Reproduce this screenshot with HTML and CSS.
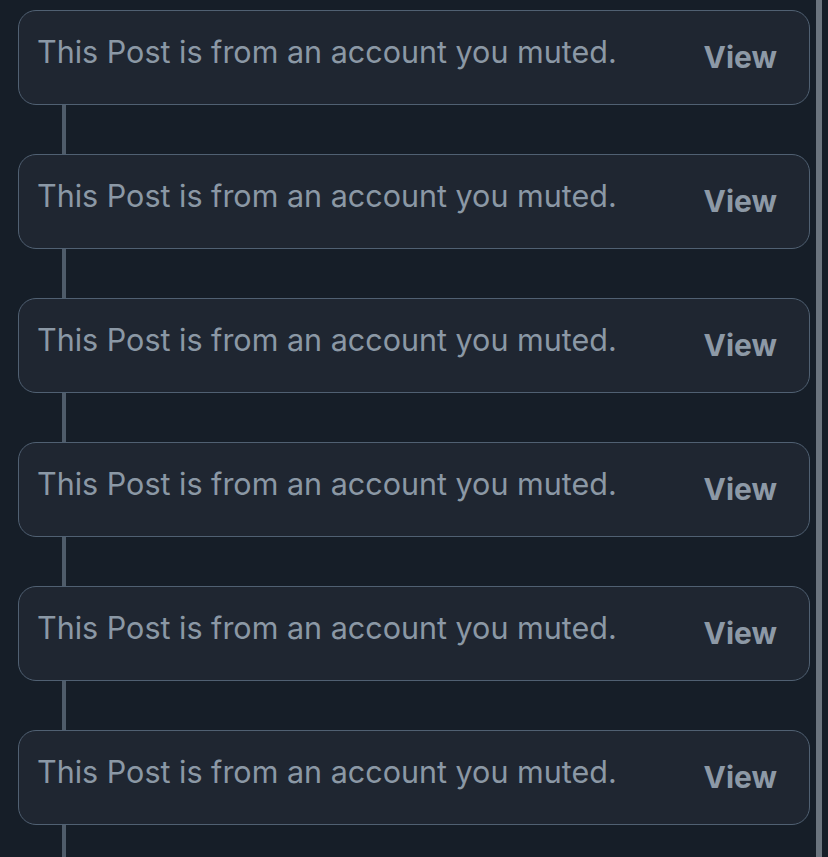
FILE: index.html
```html
<!DOCTYPE html>
<html lang="en">
<head>
    <meta charset="UTF-8">
    <meta name="viewport" content="width=device-width, initial-scale=1.0">
    <title>Muted posts</title>
    <link rel="stylesheet" href="styles.css">
</head>
<body>
    <div class="page">
        <div class="feed">
            <div class="item">
                <div class="card">
                    <span class="muted-text">This Post is from an account you muted.</span>
                    <span class="view-link">View</span>
                </div>
                <div class="thread"></div>
            </div>
            <div class="item">
                <div class="card">
                    <span class="muted-text">This Post is from an account you muted.</span>
                    <span class="view-link">View</span>
                </div>
                <div class="thread"></div>
            </div>
            <div class="item">
                <div class="card">
                    <span class="muted-text">This Post is from an account you muted.</span>
                    <span class="view-link">View</span>
                </div>
                <div class="thread"></div>
            </div>
            <div class="item">
                <div class="card">
                    <span class="muted-text">This Post is from an account you muted.</span>
                    <span class="view-link">View</span>
                </div>
                <div class="thread"></div>
            </div>
            <div class="item">
                <div class="card">
                    <span class="muted-text">This Post is from an account you muted.</span>
                    <span class="view-link">View</span>
                </div>
                <div class="thread"></div>
            </div>
            <div class="item">
                <div class="card">
                    <span class="muted-text">This Post is from an account you muted.</span>
                    <span class="view-link">View</span>
                </div>
                <div class="thread"></div>
            </div>
        </div>
        <!-- right edge bar -->
        <div class="scroll-bar"></div>
    </div>
</body>
</html>
```

FILE: styles.css
```css
/* base */
body {
    margin: 0;
    background-color: #161e28;
    font-family: Inter, "Noto Sans", Arial, sans-serif;
    height: 857px;
    overflow: hidden;
}
.page {
    display: flex;
    height: 100%;
}
.feed {
    width: 792px;
    margin-left: 18px;
    padding-top: 10px;
}
.item {
    display: flex;
    flex-direction: column;
}
.card {
    display: flex;
    justify-content: space-between;
    align-items: flex-start;
    height: 95px;
    box-sizing: border-box;
    padding: 23px 32px 0 18px;
    background-color: #1f2631;
    border: 1px solid #506072;
    border-radius: 18px;
}
.muted-text {
    font-size: 30.5px;
    line-height: 36px;
    color: #8b98a5;
}
.view-link {
    font-size: 30px;
    line-height: 36px;
    font-weight: bold;
    color: #8d99a6;
    margin-top: 5px;
}
/* thread line between cards */
.thread {
    width: 4px;
    height: 49px;
    margin-left: 44px;
    background-color: #4f5c6a;
}
.scroll-bar {
    width: 6px;
    margin-left: 6px;
    background-color: #6b747e;
}
```
